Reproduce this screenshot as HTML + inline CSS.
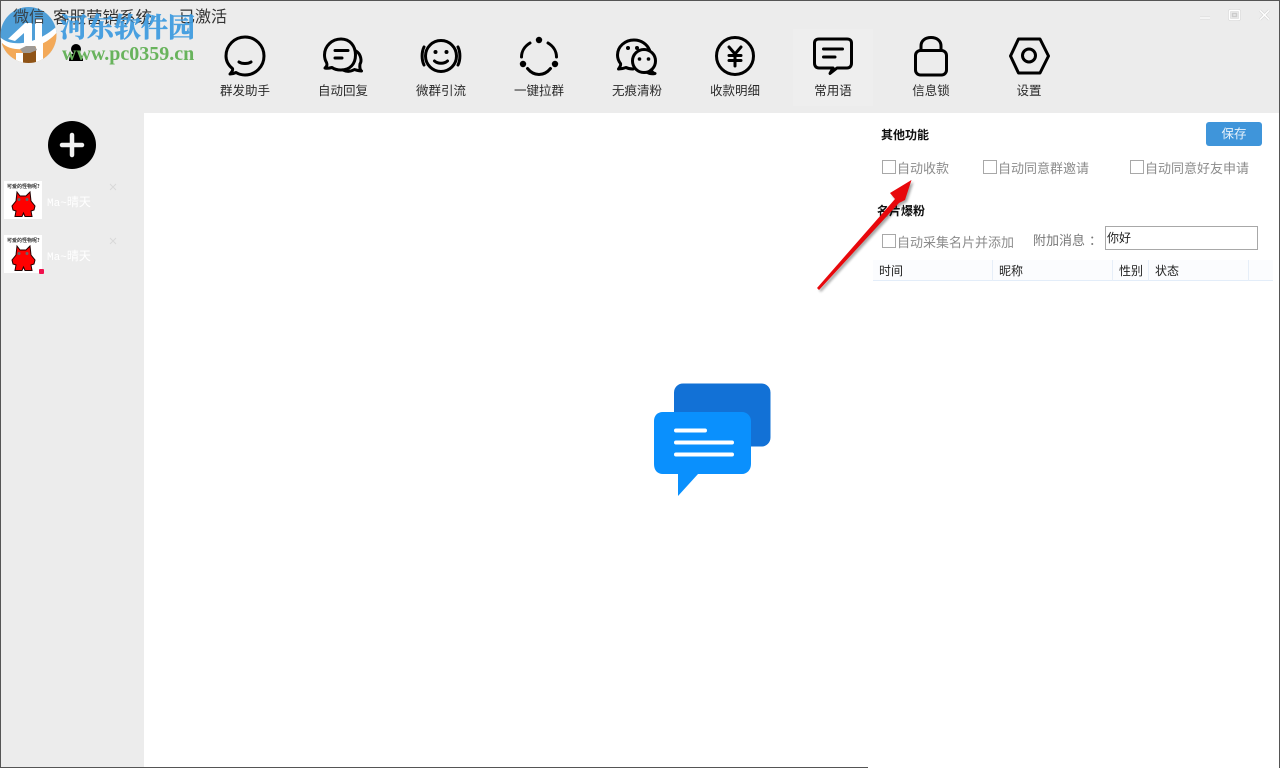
<!DOCTYPE html>
<html lang="zh">
<head>
<meta charset="utf-8">
<style>
html,body{margin:0;padding:0;width:1280px;height:768px;overflow:hidden;background:#fff;}
body{position:relative;font-family:"Liberation Sans","Noto Sans CJK SC",sans-serif;color:#222;}
.a{position:absolute;white-space:nowrap;}
.lbl{position:absolute;top:83px;width:90px;text-align:center;font-size:12.5px;line-height:16px;color:#2a2a2a;}
.g{color:#8c8c8c;font-size:13px;line-height:16px;}
.cb{position:absolute;width:12px;height:12px;border:1px solid #a8a8a8;background:#fff;}
.th{position:absolute;top:262px;font-size:12px;line-height:18px;color:#222;}
.sep{position:absolute;top:260px;width:1px;height:21px;background:#e6eef8;}
.nm{font-family:"Liberation Mono","Noto Sans CJK SC",monospace;font-size:11px;line-height:16px;color:#fff;}
.nm span{font-family:"Liberation Sans","Noto Sans CJK SC",sans-serif;font-size:12px;}
svg{position:absolute;overflow:visible;}
.ic *{fill:none;stroke:#000;stroke-width:3;stroke-linecap:round;stroke-linejoin:round;}
.ic .f{fill:#000;stroke:none;}
</style>
</head>
<body>
<div class="a" style="left:0;top:0;width:1280px;height:113px;background:#ececec;"></div>
<div class="a" style="left:0;top:113px;width:144px;height:655px;background:#ececec;"></div>
<div class="a" style="left:0;top:0;width:1280px;height:1px;background:#555;"></div>
<div class="a" style="left:0;top:0;width:1px;height:768px;background:#555;"></div>
<div class="a" style="right:0;top:0;width:1px;height:768px;background:#555;"></div>
<div class="a" style="left:0;top:767px;width:868px;height:1px;background:#555;"></div>

<!-- active toolbar item -->
<div class="a" style="left:793px;top:29px;width:80px;height:77px;background:#eeeeee;"></div>

<!-- watermark logo -->
<svg style="left:0;top:7px;" width="58" height="56" viewBox="0 0 58 56">
<defs><clipPath id="c"><circle cx="28.500" cy="28" r="28"/></clipPath></defs>
<g clip-path="url(#c)">
<rect width="58" height="56" fill="#4f9fd8"/>
<path d="M0 30C12 42 40 36 58 18V56H0Z" fill="#fff"/>
<path d="M2 36C14 48 44 42 58 24V56H0Z" fill="#f3a958"/>
<path d="M8 32L25 16H32V36H24V26L15 34Z" fill="#fff"/>
<path d="M35 12H42V31L35 34Z" fill="#fff"/>
<path d="M16 46H43V56H16Z" fill="#fff"/>
<path d="M36 34H43V52H36Z" fill="#fff"/>
<path d="M23 42H36V56H23Z" fill="#8f5417"/>
<path d="M20 42L26 39H35L37 43L30 46H23Z" fill="#a09a94"/>
</g>
</svg>

<!-- title -->
<div class="a" style="left:13px;top:8px;font-size:16px;line-height:20px;color:#333;opacity:.85;">微信</div>
<div class="a" style="left:53px;top:8px;font-size:16.500px;line-height:20px;color:#333;">客服营销系统</div>
<div class="a" style="left:179px;top:8px;font-size:16px;line-height:20px;color:#333;">已激活</div>

<!-- user glyph -->
<svg style="left:68px;top:43px;" width="16" height="19" viewBox="0 0 16 19">
<circle cx="8" cy="6" r="5" fill="#000"/><path d="M1 18C1 12 4 10 8 10C12 10 15 12 15 18Z" fill="#000"/>
</svg>

<!-- watermark text -->
<div class="a" style="left:60px;top:12px;font-family:'Liberation Serif','Noto Serif CJK SC',serif;font-weight:700;font-size:27px;line-height:32px;color:#3d9be0;opacity:.93;-webkit-text-stroke:.6px #3d9be0;">河东软件园</div>
<div class="a" style="left:62px;top:44px;font-family:'Liberation Serif',serif;font-weight:700;font-size:20px;line-height:20px;color:#68b35c;">www.pc0359.cn</div>

<!-- window controls -->
<svg style="left:1198px;top:9px;" width="72" height="14" viewBox="0 0 72 14">
<g fill="none" stroke="#d6d6d6" stroke-width="2.800">
<path d="M2 9H12"/>
<rect x="31.500" y="1.500" width="10" height="9" rx="1"/>
<path d="M62 1.500L71 10.500M71 1.500L62 10.500"/>
</g>
<g fill="none" stroke="#fff" stroke-width="1.500">
<path d="M2 9H12"/>
<rect x="31.500" y="1.500" width="10" height="9" rx="1"/><rect x="34.500" y="4.500" width="4" height="3" stroke="#ccc"/>
<path d="M62 1.500L71 10.500M71 1.500L62 10.500"/>
</g>
</svg>

<!-- toolbar icons -->
<svg class="ic" style="left:225px;top:36px;" width="40" height="40" viewBox="0 0 40 40">
<path d="M5 38C7 36 8 34 7.500 32.500C3 29 1 25 1 20C1 9.500 9.500 1 20 1C30.500 1 39 9.500 39 20C39 30.500 30.500 39 20 39C16.500 39 13.500 38 11 36.500C9 37.500 7 38 5 38Z"/>
<path d="M14 26C17 28 23 28 26 26"/>
</svg>
<svg class="ic" style="left:323px;top:37px;" width="40" height="38" viewBox="0 0 40 38">
<path d="M2 31C4 29 4.500 28 3.500 25.500C2 23 1.500 20 1.500 18C1.500 9 9 2 18 2C27 2 32.500 9 32.500 18C32.500 27 27 33 18 33C14 33 11 32 9 30.500C7 31 4 31.500 2 31Z"/>
<path d="M33 14C38 17 39 24 37 27C36.500 30 37 33 38.500 34C35.500 34 33 33 31.500 32.500C28 34.500 24 35 20 33"/>
<path d="M12 13.500H25M12 21H19"/>
</svg>
<svg class="ic" style="left:419px;top:38px;" width="44" height="36" viewBox="0 0 44 36">
<circle cx="22" cy="18" r="15.500"/>
<path d="M5 9C2.500 14 2.500 22 5 27M39 9C41.500 14 41.500 22 39 27"/>
<circle class="f" cx="16.500" cy="14" r="2"/><circle class="f" cx="27.500" cy="14" r="2"/>
<path d="M15.500 23C19 26 25 26 28.500 23"/>
</svg>
<svg class="ic" style="left:518px;top:35px;" width="42" height="42" viewBox="0 0 42 42">
<circle class="f" cx="21" cy="5" r="3.200"/><circle class="f" cx="5" cy="29" r="3.200"/><circle class="f" cx="37" cy="29" r="3.200"/>
<path d="M12 8C7 11 3.500 16 3.500 22M30 8C35 11 38.500 16 38.500 22M9.500 33.500C16 41.500 26 41.500 32.500 33.500"/>
</svg>
<svg class="ic" style="left:616px;top:38px;" width="42" height="38" viewBox="0 0 42 38">
<path d="M17 31C14 31 12 30.500 10 29.500C7.500 30.500 5 31 2.500 31C4 29 5 27 4.500 25.500C2.500 23 1.500 20 1.500 17C1.500 8.500 9 2 18 2C25 2 31 6 33.500 12"/>
<circle cx="28" cy="23" r="11.500"/>
<path d="M35 32C36 34 37.500 35 39 35.500C36 36 33 35.500 31.500 34.500"/>
<circle class="f" cx="12" cy="10" r="2"/><circle class="f" cx="21" cy="10" r="2"/>
<circle class="f" cx="23.500" cy="21" r="1.800"/><circle class="f" cx="32.500" cy="21" r="1.800"/>
</svg>
<svg class="ic" style="left:715px;top:36px;" width="41" height="40" viewBox="0 0 41 40">
<circle cx="20" cy="20" r="18.500"/>
<path d="M14 11L20 18L26 11M14 19.500H26M14 24.500H26M20 18V30" stroke-width="3"/>
</svg>
<svg class="ic" style="left:813px;top:37px;" width="40" height="38" viewBox="0 0 40 38">
<path d="M6 2H34C37 2 38.500 3.500 38.500 6V26C38.500 29 37 31 34 31H24L17 36.500L20 31H6C3 31 1.500 29 1.500 26V6C1.500 3.500 3 2 6 2Z"/>
<path d="M10.500 12H29.500M10.500 20H22" stroke-width="3"/>
</svg>
<svg class="ic" style="left:914px;top:36px;" width="34" height="40" viewBox="0 0 34 40">
<rect x="1.500" y="14.500" width="31" height="24.500" rx="5"/>
<path d="M7 14.500V10C7 4.500 11.500 1.500 17 1.500C22.500 1.500 27 4.500 27 10V14.500"/>
</svg>
<svg class="ic" style="left:1009px;top:37px;" width="41" height="38" viewBox="0 0 41 38">
<path d="M9.500 2H31L39.500 19L31 36H9.500L1.500 19Z"/>
<circle cx="20" cy="18.500" r="6.500"/>
</svg>

<!-- toolbar labels -->
<div class="lbl" style="left:200px;">群发助手</div>
<div class="lbl" style="left:298px;">自动回复</div>
<div class="lbl" style="left:396px;">微群引流</div>
<div class="lbl" style="left:494px;">一键拉群</div>
<div class="lbl" style="left:592px;">无痕清粉</div>
<div class="lbl" style="left:690px;">收款明细</div>
<div class="lbl" style="left:788px;">常用语</div>
<div class="lbl" style="left:886px;">信息锁</div>
<div class="lbl" style="left:984px;">设置</div>

<!-- sidebar add -->
<svg style="left:48px;top:121px;" width="48" height="48" viewBox="0 0 48 48">
<circle cx="24" cy="24" r="24" fill="#000"/>
<path d="M24 14V34M14 24H34" stroke="#f2f2f2" stroke-width="4.500" stroke-linecap="round"/>
</svg>

<!-- contacts -->
<svg style="left:4px;top:181px;" width="38" height="38" viewBox="0 0 38 38">
<rect width="38" height="38" fill="#fff"/>
<text x="3" y="7" font-size="5" font-weight="700" fill="#333" font-family="'Noto Sans CJK SC',sans-serif">可爱的怪物呢?</text>
<path d="M13 11L16 15H22L26 11L27 20L31 25L30 29L27 30L28 35.500H21L19.500 32L18 35.500H11L12 30L9 29L8 25L12 20Z" fill="#f00" stroke="#200" stroke-width="1"/>
<circle cx="15" cy="18.500" r="1.500" fill="#666"/><circle cx="23" cy="18.500" r="1.500" fill="#666"/>
</svg>
<svg style="left:4px;top:235px;" width="38" height="38" viewBox="0 0 38 38">
<rect width="38" height="38" fill="#fff"/>
<text x="3" y="7" font-size="5" font-weight="700" fill="#333" font-family="'Noto Sans CJK SC',sans-serif">可爱的怪物呢?</text>
<path d="M13 11L16 15H22L26 11L27 20L31 25L30 29L27 30L28 35.500H21L19.500 32L18 35.500H11L12 30L9 29L8 25L12 20Z" fill="#f00" stroke="#200" stroke-width="1"/>
<circle cx="15" cy="18.500" r="1.500" fill="#666"/><circle cx="23" cy="18.500" r="1.500" fill="#666"/>
</svg>
<div class="a" style="left:39px;top:269px;width:5px;height:5px;background:#f0104c;border-radius:1px;"></div>
<div class="a nm" style="left:47px;top:194px;">Ma~<span>晴天</span></div>
<div class="a nm" style="left:47px;top:248px;">Ma~<span>晴天</span></div>
<svg style="left:109px;top:183px;" width="8" height="8" viewBox="0 0 8 8"><path d="M1 1L7 7M7 1L1 7" stroke="#d9d9d9" stroke-width="1"/></svg>
<svg style="left:109px;top:237px;" width="8" height="8" viewBox="0 0 8 8"><path d="M1 1L7 7M7 1L1 7" stroke="#d9d9d9" stroke-width="1"/></svg>

<!-- center chat icon -->
<svg style="left:650px;top:380px;" width="125" height="120" viewBox="0 0 125 120">
<rect x="24" y="3.500" width="96.500" height="63" rx="9" fill="#1271d6"/>
<path d="M13 32H92C97 32 101 36 101 41V84C101 90 97 94 92 94H48L28 116V94H13C7 94 4 90 4 84V41C4 36 7 32 13 32Z" fill="#0a90fd"/>
<g stroke="#fff" stroke-width="4" stroke-linecap="round">
<path d="M26 50.500H55M26 62.500H82M26 74.500H82"/>
</g>
</svg>

<!-- right panel -->
<div class="a" style="left:881px;top:127px;font-size:12px;line-height:16px;font-weight:700;color:#111;">其他功能</div>
<div class="a" style="left:1206px;top:122px;width:56px;height:24px;background:#3f95da;border-radius:3px;color:#e8f2fb;font-size:12.500px;line-height:24px;text-align:center;">保存</div>

<div class="cb" style="left:882px;top:160px;"></div>
<div class="a g" style="left:897px;top:161px;">自动收款</div>
<div class="cb" style="left:983px;top:160px;"></div>
<div class="a g" style="left:998px;top:161px;">自动同意群邀请</div>
<div class="cb" style="left:1130px;top:160px;"></div>
<div class="a g" style="left:1145px;top:161px;">自动同意好友申请</div>

<div class="a" style="left:877px;top:203px;font-size:12px;line-height:16px;font-weight:700;color:#111;">名片爆粉</div>
<div class="cb" style="left:882px;top:234px;"></div>
<div class="a g" style="left:897px;top:235px;">自动采集名片并添加</div>
<div class="a g" style="left:1033px;top:233px;color:#777;font-family:'Liberation Sans','Noto Sans CJK TC',sans-serif;">附加消息<span style="margin-left:4px;">：</span></div>
<div class="a" style="left:1105px;top:226px;width:150px;height:22px;border:1px solid #a8a8a8;background:#fff;font-size:12px;line-height:22px;color:#222;padding-left:1px;">你好</div>

<!-- table header -->
<div class="a" style="left:873px;top:260px;width:400px;height:20px;background:#fbfcfe;border-bottom:1px solid #e3edf9;"></div>
<div class="sep" style="left:992px;"></div>
<div class="sep" style="left:1112px;"></div>
<div class="sep" style="left:1148px;"></div>
<div class="sep" style="left:1248px;"></div>
<div class="th" style="left:879px;">时间</div>
<div class="th" style="left:999px;">昵称</div>
<div class="th" style="left:1119px;">性别</div>
<div class="th" style="left:1155px;">状态</div>

<!-- red arrow -->
<svg style="left:810px;top:175px;" width="110" height="125" viewBox="0 0 110 125">
<defs><filter id="s" x="-20%" y="-20%" width="140%" height="140%"><feGaussianBlur stdDeviation="1.200"/></filter></defs>
<path d="M7 113L85 24L80 18L101.500 5L95 25L89 28L9 115Z" fill="#000" opacity=".35" filter="url(#s)" transform="translate(2 2)"/>
<path d="M7 113L85 24L80 18L101.500 5L95 25L89 28L9 115Z" fill="#e8080c"/>
</svg>
</body>
</html>
